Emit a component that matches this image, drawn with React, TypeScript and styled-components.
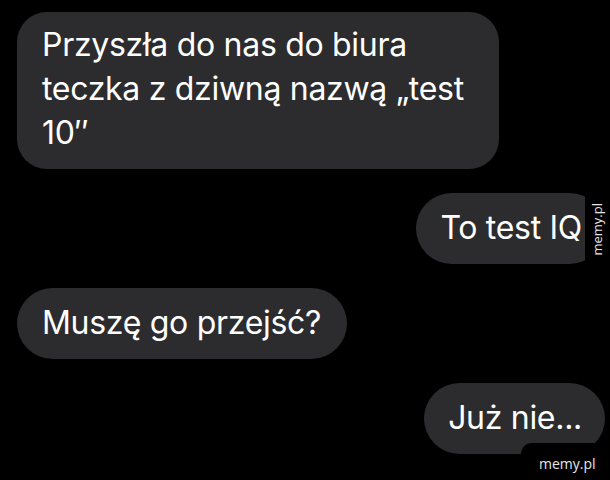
import React from "react";
import styled, { createGlobalStyle } from "styled-components";

const GlobalStyle = createGlobalStyle`
  html, body {
    margin: 0;
    padding: 0;
    background: #000;
  }
  body {
    font-family: Inter, "Noto Sans", "Liberation Sans", sans-serif;
  }
`;

const Page = styled.div`
  position: relative;
  width: 610px;
  height: 480px;
  overflow: hidden;
  background: #000;
`;

const Thread = styled.div`
  display: flex;
  flex-direction: column;
  gap: 24px;
  padding: 12px 5px 0 17px;
`;

const Bubble = styled.div<{ $side: "in" | "out"; $maxWidth?: number }>`
  align-self: ${(p) => (p.$side === "in" ? "flex-start" : "flex-end")};
  max-width: ${(p) => (p.$maxWidth ? `${p.$maxWidth}px` : "none")};
  box-sizing: border-box;
  background: #2c2c2e;
  color: #fff;
  font-size: 32px;
  line-height: 44px;
  letter-spacing: -0.3px;
  padding: 13px ${(p) => (p.$side === "in" ? "26px" : "23px")} 14px
    ${(p) => (p.$side === "in" ? "25px" : "24px")};
  border-radius: 36px;
`;

const MultiBubble = styled(Bubble)`
  padding-top: 11px;
  padding-bottom: 14px;
  border-radius: 30px;
`;

const SideTab = styled.div`
  position: absolute;
  left: 585px;
  top: 190px;
  width: 40px;
  height: 78px;
  background: #000;
  border-radius: 9px;
  display: flex;
  align-items: center;
  justify-content: flex-start;
`;

const SideMark = styled.span`
  display: block;
  width: 18px;
  writing-mode: vertical-rl;
  transform: rotate(180deg);
  font-family: "Open Sans", "Noto Sans", sans-serif;
  font-size: 13px;
  line-height: 18px;
  color: #e6e6e6;
  text-align: center;
  margin-left: 3px;
`;

const CornerTab = styled.div`
  position: absolute;
  left: 521px;
  top: 443px;
  width: 100px;
  height: 50px;
  background: #000;
  border-radius: 11px;
  box-sizing: border-box;
  padding: 10px 0 0 18px;
`;

const CornerMark = styled.span`
  font-family: "Open Sans", "Noto Sans", sans-serif;
  font-size: 14px;
  line-height: 20px;
  color: #e6e6e6;
`;

export default function App() {
  return (
    <Page>
      <GlobalStyle />
      <Thread>
        <MultiBubble $side="in" $maxWidth={482}>
          Przyszła do nas do biura teczka z dziwną nazwą „test 10″
        </MultiBubble>
        <Bubble $side="out">To test IQ</Bubble>
        <Bubble $side="in">Muszę go przejść?</Bubble>
        <Bubble $side="out">Już nie...</Bubble>
      </Thread>
      <SideTab>
        <SideMark>memy.pl</SideMark>
      </SideTab>
      <CornerTab>
        <CornerMark>memy.pl</CornerMark>
      </CornerTab>
    </Page>
  );
}
